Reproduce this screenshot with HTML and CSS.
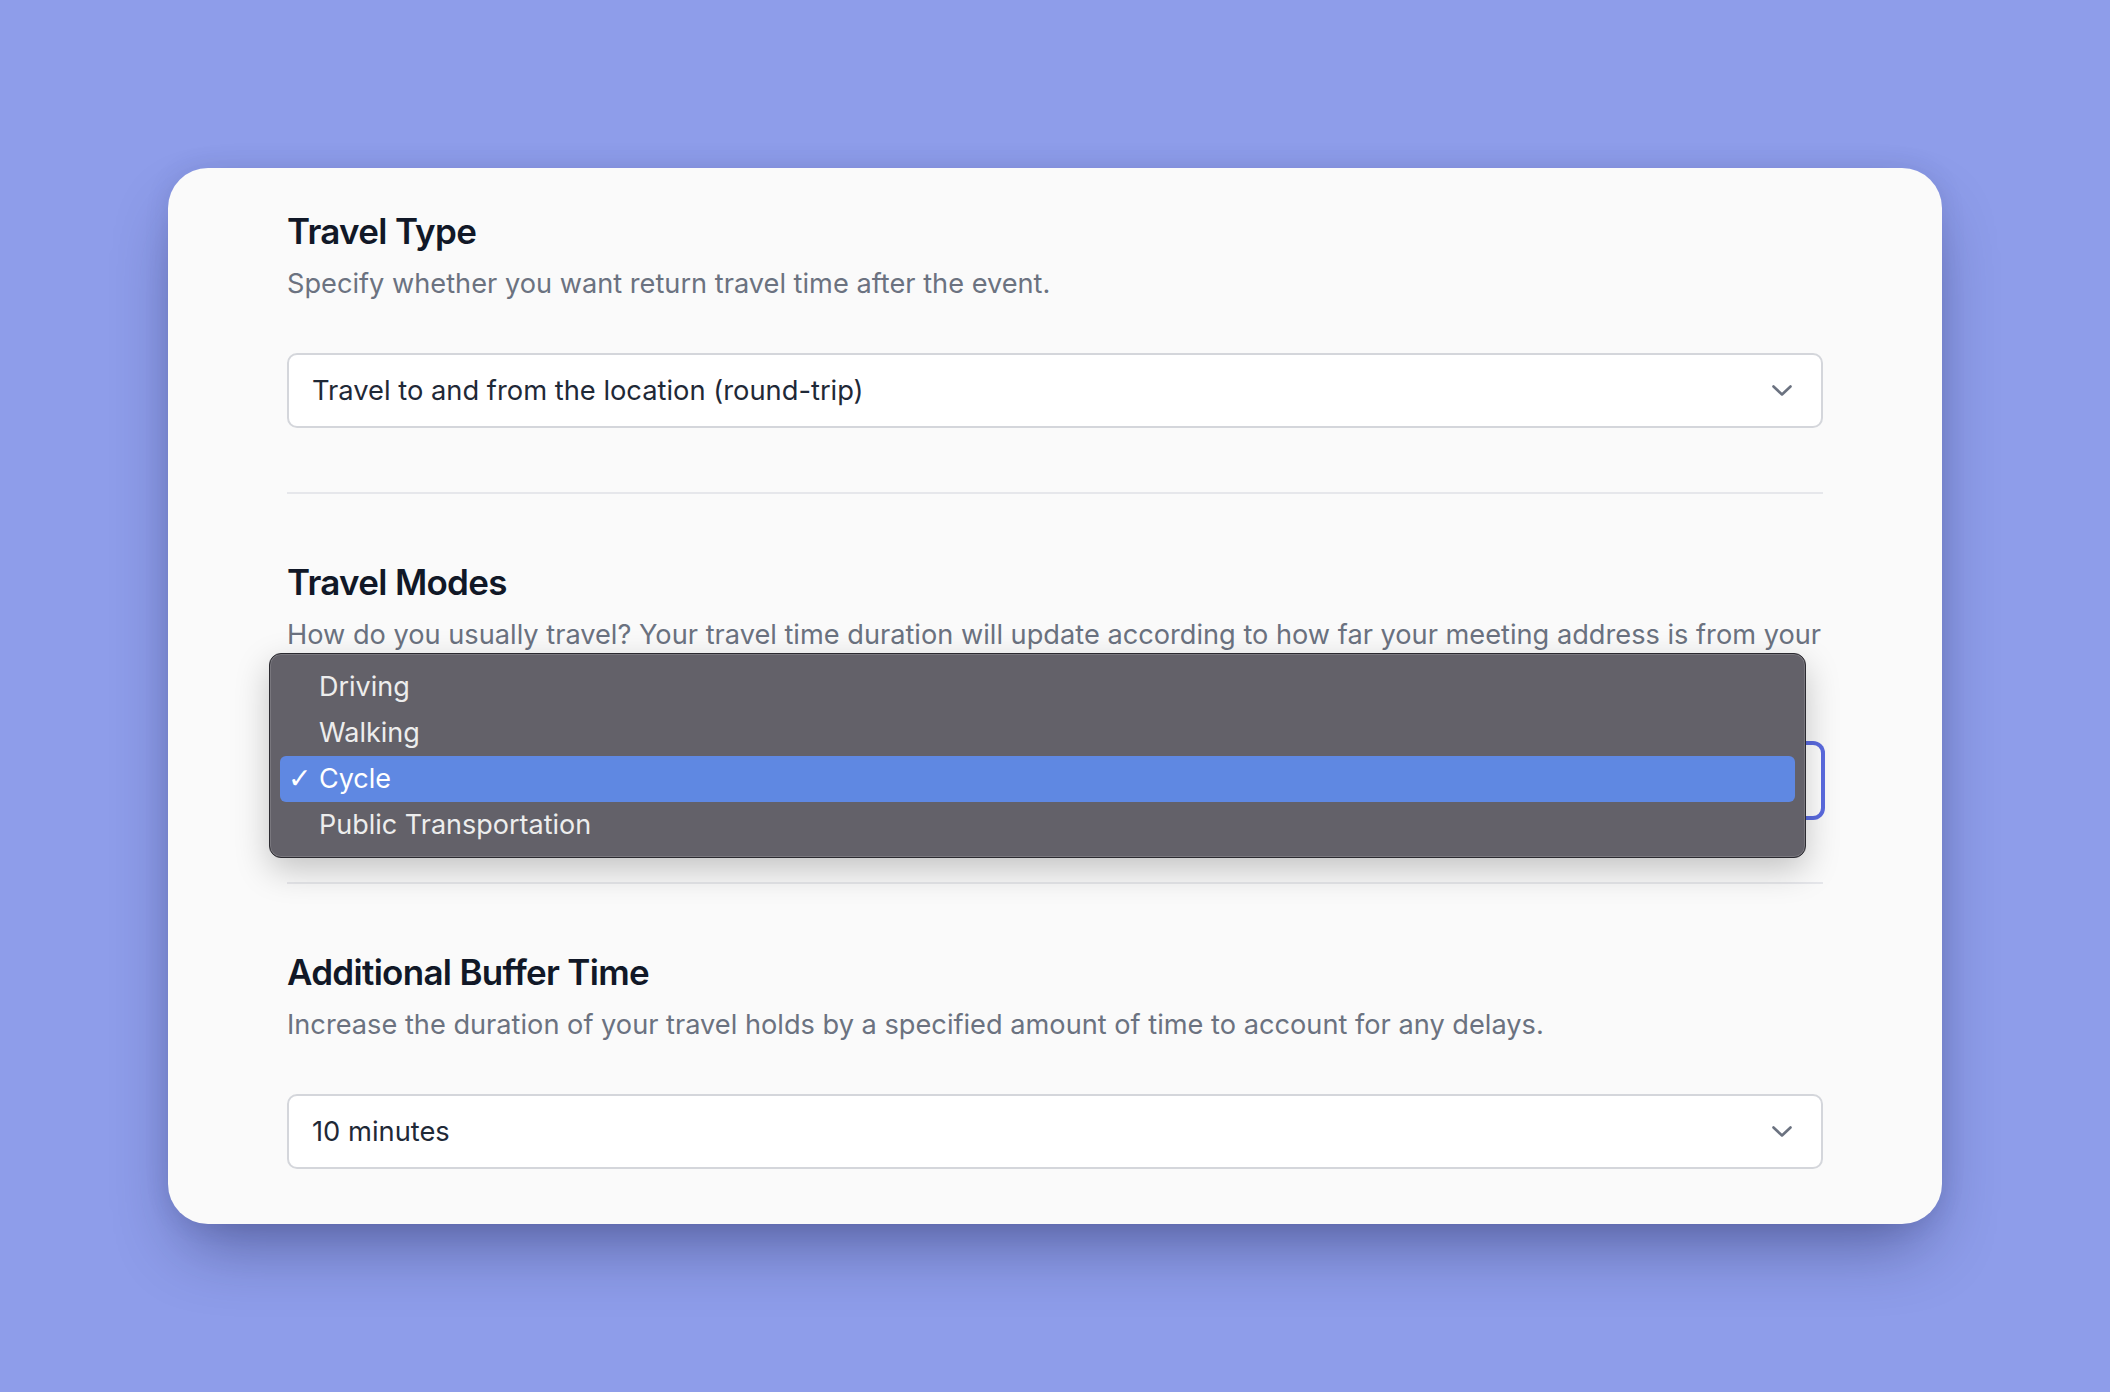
FILE: index.html
```html
<!DOCTYPE html>
<html lang="en">
<head>
<meta charset="utf-8">
<title>Travel settings</title>
<link rel="stylesheet" href="styles.css">
</head>
<body>
<main class="card">
  <section class="section">
    <h2 class="title">Travel Type</h2>
    <p class="desc">Specify whether you want return travel time after the event.</p>
    <div class="select">
      <span class="value">Travel to and from the location (round-trip)</span>
      <svg class="chev" viewBox="0 0 22 14" width="22" height="14"><path d="M2.5 2.5 L11 10.5 L19.5 2.5" fill="none" stroke="#6b7280" stroke-width="2.6" stroke-linecap="round" stroke-linejoin="round"/></svg>
    </div>
  </section>
  <section class="section modes">
    <h2 class="title">Travel Modes</h2>
    <p class="desc">How do you usually travel? Your travel time duration will update according to how far your meeting address is from your current location.</p>
    <div class="select focused">
      <span class="value">Cycle</span>
      <svg class="chev" viewBox="0 0 22 14" width="22" height="14"><path d="M2.5 2.5 L11 10.5 L19.5 2.5" fill="none" stroke="#6b7280" stroke-width="2.6" stroke-linecap="round" stroke-linejoin="round"/></svg>
    </div>
    <ul class="menu">
      <li class="item">Driving</li>
      <li class="item">Walking</li>
      <li class="item selected"><span class="check">✓</span>Cycle</li>
      <li class="item">Public Transportation</li>
    </ul>
  </section>
  <section class="section last">
    <h2 class="title">Additional Buffer Time</h2>
    <p class="desc">Increase the duration of your travel holds by a specified amount of time to account for any delays.</p>
    <div class="select">
      <span class="value">10 minutes</span>
      <svg class="chev" viewBox="0 0 22 14" width="22" height="14"><path d="M2.5 2.5 L11 10.5 L19.5 2.5" fill="none" stroke="#6b7280" stroke-width="2.6" stroke-linecap="round" stroke-linejoin="round"/></svg>
    </div>
  </section>
</main>
</body>
</html>
```
FILE: styles.css
```css
* { box-sizing: border-box; }
html, body { margin: 0; padding: 0; }
body {
  min-height: 100vh;
  background: #8e9dea;
  display: flex;
  align-items: center;
  justify-content: center;
  font-family: Inter, "Liberation Sans", sans-serif;
}
.card {
  width: 1774px;
  background: #fafafa;
  border-radius: 40px;
  padding: 43px 119px 55px;
  box-shadow: 0 34px 68px -16px rgba(20, 25, 70, 0.45), 0 0 24px rgba(40, 50, 110, 0.12);
}
.section {
  position: relative;
  padding: 68px 0 64px;
  border-bottom: 2px solid #e6e7eb;
}
.section:first-child { padding-top: 0; }
.section.last { border-bottom: none; padding-bottom: 0; }
.title {
  margin: 0;
  font-size: 35px;
  line-height: 40px;
  font-weight: 600;
  letter-spacing: -0.02em;
  color: #111827;
}
.desc {
  margin: 13px 0 0;
  font-size: 27.2px;
  line-height: 39px;
  color: #6b7280;
}
.select {
  margin-top: 50px;
  height: 75px;
  background: #ffffff;
  border: 2px solid #d4d6db;
  border-radius: 10px;
  display: flex;
  align-items: center;
  justify-content: space-between;
  padding: 0 28px 0 23px;
}
.select.focused {
  border-color: #5b6be0;
  box-shadow: 0 0 0 2px #5b6be0;
}
.value {
  font-size: 27.3px;
  color: #1f2937;
}
.chev { display: block; }
.menu {
  position: absolute;
  left: -18px;
  top: 159px;
  width: 1537px;
  margin: 0;
  padding: 10px 10px 9px 10px;
  list-style: none;
  background: #636169;
  border: 1px solid #2b2a30;
  border-radius: 12px;
  box-shadow: inset 0 0 0 1px rgba(255, 255, 255, 0.14), 0 12px 34px rgba(0, 0, 0, 0.22);
}
.item {
  position: relative;
  height: 46px;
  line-height: 46px;
  padding-left: 39px;
  font-size: 27px;
  color: #ededed;
  border-radius: 6px;
}
.item.selected {
  background: #5f88e2;
  color: #ffffff;
}
.check {
  position: absolute;
  left: 8px;
  top: 0;
  font-size: 28px;
  font-family: "DejaVu Sans", sans-serif;
}
```
